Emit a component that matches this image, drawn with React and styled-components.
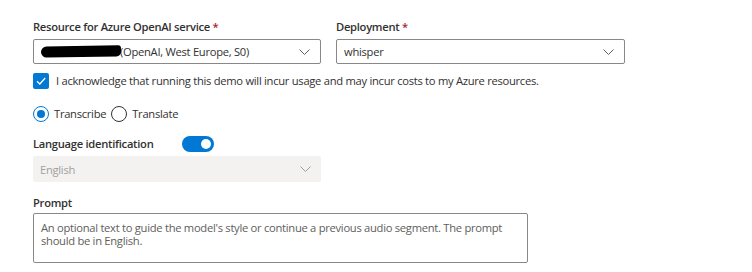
import React from 'react';
import styled, { createGlobalStyle } from 'styled-components';

const COLORS = {
  text: '#323130',
  border: '#8a8886',
  blue: '#0078d4',
  muted: '#605e5c',
  disabledBg: '#f3f2f1',
  disabledText: '#a19f9d',
  required: '#a4262c',
};

const FONT = '"Open Sans", "Noto Sans", sans-serif';
const SIZE = '11.2px';

const GlobalStyle = createGlobalStyle`
  body {
    margin: 0;
    background: #ffffff;
    font-family: ${FONT};
    letter-spacing: -0.28px;
    color: ${COLORS.text};
  }
`;

const Chevron = ({ disabled }) => (
  <ChevronIcon width="11" height="6" viewBox="0 0 11 6" disabled={disabled}>
    <path d="M0.5 0.5 L5.5 5.5 L10.5 0.5" fill="none" stroke="currentColor" strokeWidth="1" />
  </ChevronIcon>
);

const Dropdown = ({ children, disabled, width }) => (
  <DropdownBox disabled={disabled} $width={width}>
    <DropdownValue disabled={disabled}>{children}</DropdownValue>
    <Chevron disabled={disabled} />
  </DropdownBox>
);

const App = () => (
  <>
    <GlobalStyle />
    <Page>
      <FieldRow>
        <Field>
          <Label>
            Resource for Azure OpenAI service <Star>*</Star>
          </Label>
          <Dropdown width={288}>
            <Redacted />
            (OpenAI, West Europe, S0)
          </Dropdown>
        </Field>
        <Field>
          <Label>
            Deployment <Star>*</Star>
          </Label>
          <Dropdown width={289}>whisper</Dropdown>
        </Field>
      </FieldRow>

      <CheckRow>
        <CheckBox>
          <svg width="12" height="12" viewBox="0 0 12 12">
            <path d="M2 6.3 L4.8 9 L10.2 3" fill="none" stroke="#fff" strokeWidth="1.3" />
          </svg>
        </CheckBox>
        <OptionText>
          I acknowledge that running this demo will incur usage and may incur costs to my Azure resources.
        </OptionText>
      </CheckRow>

      <RadioRow>
        <RadioOption>
          <Radio checked />
          <OptionText>Transcribe</OptionText>
        </RadioOption>
        <RadioOption>
          <Radio />
          <OptionText>Translate</OptionText>
        </RadioOption>
      </RadioRow>

      <ToggleRow>
        <ToggleLabel>Language identification</ToggleLabel>
        <Toggle>
          <Knob />
        </Toggle>
      </ToggleRow>

      <DisabledWrap>
        <Dropdown width={288} disabled>English</Dropdown>
      </DisabledWrap>

      <PromptField>
        <PromptLabel>Prompt</PromptLabel>
        <TextArea>
          An optional text to guide the model&apos;s style or continue a previous audio segment. The prompt should be in English.
        </TextArea>
      </PromptField>
    </Page>
  </>
);

const Page = styled.div`
  display: flex;
  flex-direction: column;
  align-items: flex-start;
  padding: 19px 0 0 33px;
  font-size: ${SIZE};
`;

const FieldRow = styled.div`
  display: flex;
  gap: 15px;
`;

const Field = styled.div`
  display: flex;
  flex-direction: column;
  gap: 4px;
`;

const Label = styled.div`
  font-size: ${SIZE};
  font-weight: 600;
  line-height: 16px;
  color: ${COLORS.text};
`;

const Star = styled.span`
  color: ${COLORS.required};
  font-weight: 600;
`;

const DropdownBox = styled.div`
  box-sizing: border-box;
  width: ${({ $width }) => $width}px;
  height: ${({ disabled }) => (disabled ? 26 : 25)}px;
  display: flex;
  align-items: center;
  justify-content: space-between;
  padding: 0 10px 0 7px;
  border: ${({ disabled }) => (disabled ? 'none' : `1px solid ${COLORS.border}`)};
  border-radius: 2px;
  background: ${({ disabled }) => (disabled ? COLORS.disabledBg : '#fff')};
`;

const DropdownValue = styled.span`
  display: flex;
  align-items: center;
  font-size: ${SIZE};
  color: ${({ disabled }) => (disabled ? COLORS.disabledText : COLORS.text)};
  white-space: nowrap;
`;

const Redacted = styled.span`
  display: inline-block;
  width: 80px;
  height: 11px;
  margin-right: -1px;
  background: #000;
  border-radius: 6px 3px 5px 6px;
  transform: rotate(-1deg);
`;

const ChevronIcon = styled.svg`
  color: ${({ disabled }) => (disabled ? COLORS.disabledText : COLORS.muted)};
  flex-shrink: 0;
`;

const CheckRow = styled.div`
  display: flex;
  align-items: center;
  gap: 7px;
  margin-top: 9px;
  height: 16px;
`;

const CheckBox = styled.span`
  width: 16px;
  height: 16px;
  border-radius: 2px;
  background: ${COLORS.blue};
  display: flex;
  align-items: center;
  justify-content: center;
`;

const OptionText = styled.span`
  font-size: ${SIZE};
  line-height: 16px;
  color: ${COLORS.text};
  white-space: nowrap;
`;

const RadioRow = styled.div`
  display: flex;
  gap: 5px;
  margin-top: 17px;
  height: 16px;
`;

const RadioOption = styled.div`
  display: flex;
  align-items: center;
  gap: 5px;
`;

const Radio = styled.span`
  box-sizing: border-box;
  width: 16px;
  height: 16px;
  border-radius: 50%;
  border: 1px solid ${({ checked }) => (checked ? COLORS.blue : COLORS.text)};
  display: flex;
  align-items: center;
  justify-content: center;

  &::after {
    content: '';
    width: 8px;
    height: 8px;
    border-radius: 50%;
    background: ${COLORS.blue};
    display: ${({ checked }) => (checked ? 'block' : 'none')};
  }
`;

const ToggleRow = styled.div`
  display: flex;
  align-items: center;
  margin-top: 14px;
  height: 16px;
`;

const ToggleLabel = styled(Label)`
  width: 149px;
`;

const Toggle = styled.span`
  box-sizing: border-box;
  width: 32px;
  height: 16px;
  border-radius: 8px;
  background: ${COLORS.blue};
  display: flex;
  align-items: center;
  justify-content: flex-end;
  padding-right: 3px;
`;

const Knob = styled.span`
  width: 10px;
  height: 10px;
  border-radius: 50%;
  background: #fff;
`;

const DisabledWrap = styled.div`
  margin-top: 4px;
`;

const PromptField = styled(Field)`
  margin-top: 13px;
  gap: 2px;
`;

const PromptLabel = styled(Label)``;

const TextArea = styled.div`
  box-sizing: border-box;
  width: 495px;
  height: 50px;
  border: 1px solid ${COLORS.border};
  border-radius: 2px;
  padding: 7px 7px 5px;
  font-size: ${SIZE};
  line-height: 13px;
  color: ${COLORS.muted};
`;

export default App;
